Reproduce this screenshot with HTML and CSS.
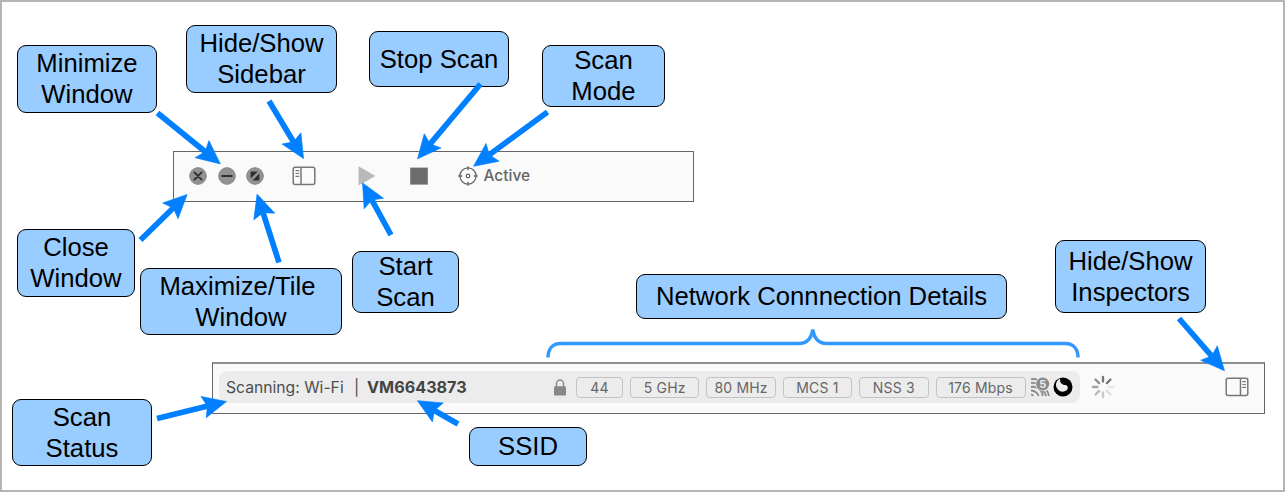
FILE: index.html
```html
<!DOCTYPE html>
<html lang="en">
<head>
<meta charset="utf-8">
<title>Toolbar guide</title>
<link rel="stylesheet" href="styles.css">
</head>
<body>
<main class="diagram">
  <section class="toolbar toolbar-main">
    <div class="window-buttons">
      <svg width="18" height="18" viewBox="0 0 18 18"><circle class="disc" cx="9" cy="9" r="8.3"/><path class="glyph" d="M5.400 5.400l7.200 7.200M12.600 5.400l-7.200 7.200"/></svg>
      <svg width="18" height="18" viewBox="0 0 18 18"><circle class="disc" cx="9" cy="9" r="8.3"/><path class="glyph" d="M4.200 9h9.600"/></svg>
      <svg width="18" height="18" viewBox="0 0 18 18"><circle class="disc" cx="9" cy="9" r="8.3"/><path fill="#2e2e2e" d="M4.600 11.500V5.700q0-1.200 1.200-1.200h5.900zM13.400 6.500v5.900q0 1.200-1.200 1.200H6.400z"/></svg>
    </div>
    <svg class="sidebar-icon" width="24" height="20" viewBox="0 0 24 20"><rect class="panel" x="1.200" y="1.200" width="21.600" height="17.400" rx="2"/><path class="panel" d="M9 1v18"/><path class="rows" d="M3.500 4.700h3.800M3.500 7.500h3.800M3.500 10.300h3.800"/></svg>
    <svg class="play-icon" width="18" height="20" viewBox="0 0 18 20"><path fill="#b9b9b9" d="M.5.3v19.200l17-9.600z"/></svg>
    <svg class="stop-icon" width="18" height="18" viewBox="0 0 18 18"><path fill="#6d6d6d" d="M.2.6h17.600v17H.2z"/></svg>
    <div class="mode">
      <svg width="20" height="20" viewBox="0 0 20 20" fill="none" stroke="#666" stroke-width="1.3"><circle cx="10" cy="10" r="8.100"/><circle cx="10" cy="10" r="1.800"/><path d="M10 .3v4M10 15.700v4M.3 10h4M15.700 10h4"/></svg>
      <span>Active</span>
    </div>
  </section>

  <section class="toolbar toolbar-status">
    <div class="status">
      <span class="state">Scanning: Wi-Fi</span><span class="divider">|</span><b class="ssid">VM6643873</b>
      <div class="details">
        <svg class="lock" width="12" height="17" viewBox="0 0 12 17"><path d="M2.500 8V4.500a3.500 3.500 0 0 1 7 0V8" fill="none" stroke="#8b8b90" stroke-width="1.500"/><rect y="7.300" width="12" height="9.300" rx="1.300" fill="#87878c"/></svg>
        <span class="chip chip-small">44</span>
        <span class="chip">5 GHz</span>
        <span class="chip">80 MHz</span>
        <span class="chip">MCS 1</span>
        <span class="chip">NSS 3</span>
        <span class="chip chip-wide">176 Mbps</span>
      </div>
      <svg class="wifi" width="20" height="20" viewBox="0 0 20 20"><g fill="none" stroke="#8a8a8a" stroke-width="1.800"><path d="M1 2.500q2.500-1 6 0M1 6.200q3-.8 5 .2M1 10q4-.8 7 1.200 4 2.200 4.800 7.800M1 13.500q3 0 5 1.800 2 1.500 2.600 3.700M1 17.300q1.700.2 2.200 1.700M12.500 13.500q3 2 3.700 5.500M16.500 13.300q2 2 2.400 5.700"/></g><circle cx="12.700" cy="7" r="7.200" fill="#ececec"/><circle cx="12.700" cy="7" r="6.500" fill="#8a8a8a"/><text x="12.700" y="11" text-anchor="middle">5</text></svg>
      <svg class="swirl" width="20" height="20" viewBox="0 0 20 20"><circle cx="10" cy="10" r="9.500" fill="#000"/><path fill="#ececec" d="M7.200 1.400C3.200 3.400 1.900 7.800 4 11.200c2.200 3.600 6.500 4.500 9.300 2.400 2.600-2 1.700-5-.9-5.500C9 7.500 6.300 5.500 7.200 1.400z"/></svg>
    </div>
    <svg class="spinner" width="24" height="24" viewBox="-12 -12 24 24"><g stroke-width="2.300" stroke-linecap="round"><path stroke="#747474" d="M0-5.500v-4.700"/><path stroke="#777" d="M3.900-3.900l3.600-3.600"/><path stroke="#e8e8e8" d="M5.500 0h4.700"/><path stroke="#dedede" d="M3.900 3.900l3.600 3.600"/><path stroke="#c9c9c9" d="M0 5.500v4.700"/><path stroke="#b8b8b8" d="M-3.900 3.900l-3.600 3.600"/><path stroke="#a4a4a4" d="M-5.500 0h-4.700"/><path stroke="#8d8d8d" d="M-3.900-3.900l-3.600-3.600"/></g></svg>
    <svg class="inspector-icon" width="24" height="20" viewBox="0 0 24 20"><rect class="panel" x="1.200" y="1.200" width="21.600" height="17.400" rx="2"/><path class="panel" d="M15.500 1v18"/><path class="rows" d="M17.400 4.700h3.600M17.400 7.500h3.600M17.400 10.300h3.600"/></svg>
  </section>

  <div class="callout minimize">Minimize<br>Window</div>
  <div class="callout sidebar">Hide/Show<br>Sidebar</div>
  <div class="callout stop">Stop Scan</div>
  <div class="callout scan-mode">Scan<br>Mode</div>
  <div class="callout close">Close<br>Window</div>
  <div class="callout maximize">Maximize/Tile&nbsp;<br>Window</div>
  <div class="callout start">Start<br>Scan</div>
  <div class="callout network">Network Connnection Details</div>
  <div class="callout inspectors">Hide/Show<br>Inspectors</div>
  <div class="callout scan-status">Scan<br>Status</div>
  <div class="callout ssid-label">SSID</div>

  <svg class="connectors" width="1285" height="492" viewBox="0 0 1285 492">
    <defs><marker id="head" markerUnits="userSpaceOnUse" markerWidth="30" markerHeight="28" refX="9" refY="13" orient="auto" overflow="visible"><path d="M26 13L2.500 2L6.500 13L2.500 24z" fill="#007fff" stroke="#007fff" stroke-width=".6"/></marker></defs>
    <g class="arrows">
      <path d="M157.500 113L207.100 153.200"/>
      <path d="M269 101L294.800 144"/>
      <path d="M140.500 240L175 206.300"/>
      <path d="M279 262.500L262.300 210.300"/>
      <path d="M480.500 84L428.500 145.800"/>
      <path d="M547.500 112L487.300 156.200"/>
      <path d="M391 235L370.700 197.800"/>
      <path d="M157 418.500L209.900 405.600"/>
      <path d="M458 424L432.200 409.200"/>
      <path d="M1179 318.500L1213.300 357.900"/>
    </g>
    <path class="brace" d="M548 357.500C548 349 552.500 343.500 561 343.500H799Q810.500 343.500 812.800 329.500Q815 343.500 826.500 343.500H1065C1073.500 343.500 1078 349 1078 357.500"/>
  </svg>
</main>
</body>
</html>
```
FILE: styles.css
```css
* { box-sizing: border-box; }
body { margin: 0; background: #fff; }
svg { display: block; flex: none; }
.diagram {
  position: relative;
  width: 1285px;
  height: 492px;
  border: 2px solid #b5b5b5;
  overflow: hidden;
  font-family: "Liberation Sans", Arial, sans-serif;
}
.toolbar {
  position: absolute;
  display: flex;
  align-items: center;
  background: #fafafa;
  border: 1px solid #666;
  font-family: Inter, sans-serif;
}
.toolbar-main { left: 171px; top: 149px; width: 521px; height: 51px; padding: 0 0 2px 15px; }
.toolbar-status { left: 210px; top: 360px; width: 1053px; height: 52px; padding-left: 6px; border-top: 2px solid #909090; }
.window-buttons { display: flex; gap: 10.500px; }
.disc { fill: #929292; stroke: #858585; }
.glyph { fill: none; stroke: #2e2e2e; stroke-width: 1.900; stroke-linecap: round; }
.panel { fill: none; stroke: #777; stroke-width: 1.500; }
.rows { stroke: #777; stroke-width: 1.200; }
.sidebar-icon { margin-left: 28px; }
.play-icon { margin-left: 42px; }
.stop-icon { margin-left: 34px; }
.mode { display: flex; align-items: center; gap: 6px; margin-left: 29.500px; color: #666; font-size: 15.500px; font-weight: 500; }
.status {
  display: flex;
  align-items: center;
  width: 861px;
  height: 32px;
  padding-left: 7px;
  margin-bottom: 3px;
  border-radius: 8px;
  background: #ececec;
  color: #4c4c4c;
  font-size: 15.700px;
}
.state { width: 128px; }
.divider { width: 13px; }
.ssid { width: 187px; color: #444; font-size: 16.200px; }
.details { display: flex; align-items: center; gap: 7px; }
.lock { margin-right: 3px; }
.chip {
  width: 69.400px;
  height: 21px;
  border: 1.500px solid #c3c3c3;
  border-radius: 4px;
  text-align: center;
  font-size: 14px;
  letter-spacing: .2px;
  line-height: 19px;
  color: #666;
  white-space: nowrap;
}
.chip-small { width: 47px; }
.chip-wide { width: 90px; }
.wifi { margin-left: 4px; }
.wifi text { font: bold 11px Inter, sans-serif; fill: #ececec; }
.swirl { margin-left: 3px; }
.spinner { margin: 0 0 3px 11px; }
.inspector-icon { margin: 0 0 3px 109.500px; }
.callout {
  position: absolute;
  display: flex;
  align-items: center;
  justify-content: center;
  border: 1px solid #000;
  border-radius: 9px;
  background: #99ccff;
  color: #000;
  font-size: 25.700px;
  line-height: 31px;
  text-align: center;
  white-space: nowrap;
}
.minimize { left: 15px; top: 43px; width: 140px; height: 68px; }
.sidebar { left: 184px; top: 23px; width: 151px; height: 68px; }
.stop { left: 367px; top: 29px; width: 140px; height: 56px; }
.scan-mode { left: 540px; top: 43px; width: 123px; height: 62px; }
.close { left: 15px; top: 227px; width: 118px; height: 68px; }
.maximize { left: 138px; top: 266px; width: 202px; height: 67px; }
.start { left: 350px; top: 249px; width: 107px; height: 62px; }
.network { left: 634px; top: 272px; width: 371px; height: 45px; }
.inspectors { left: 1053px; top: 238px; width: 151px; height: 73px; }
.scan-status { left: 10px; top: 397px; width: 140px; height: 67px; }
.ssid-label { left: 467px; top: 425px; width: 118px; height: 39px; }
.connectors { position: absolute; left: -2px; top: -2px; pointer-events: none; }
.arrows > path { stroke: #007fff; stroke-width: 5.700; fill: none; marker-end: url(#head); }
.brace { fill: none; stroke: #3399ff; stroke-width: 3.500; }
```
